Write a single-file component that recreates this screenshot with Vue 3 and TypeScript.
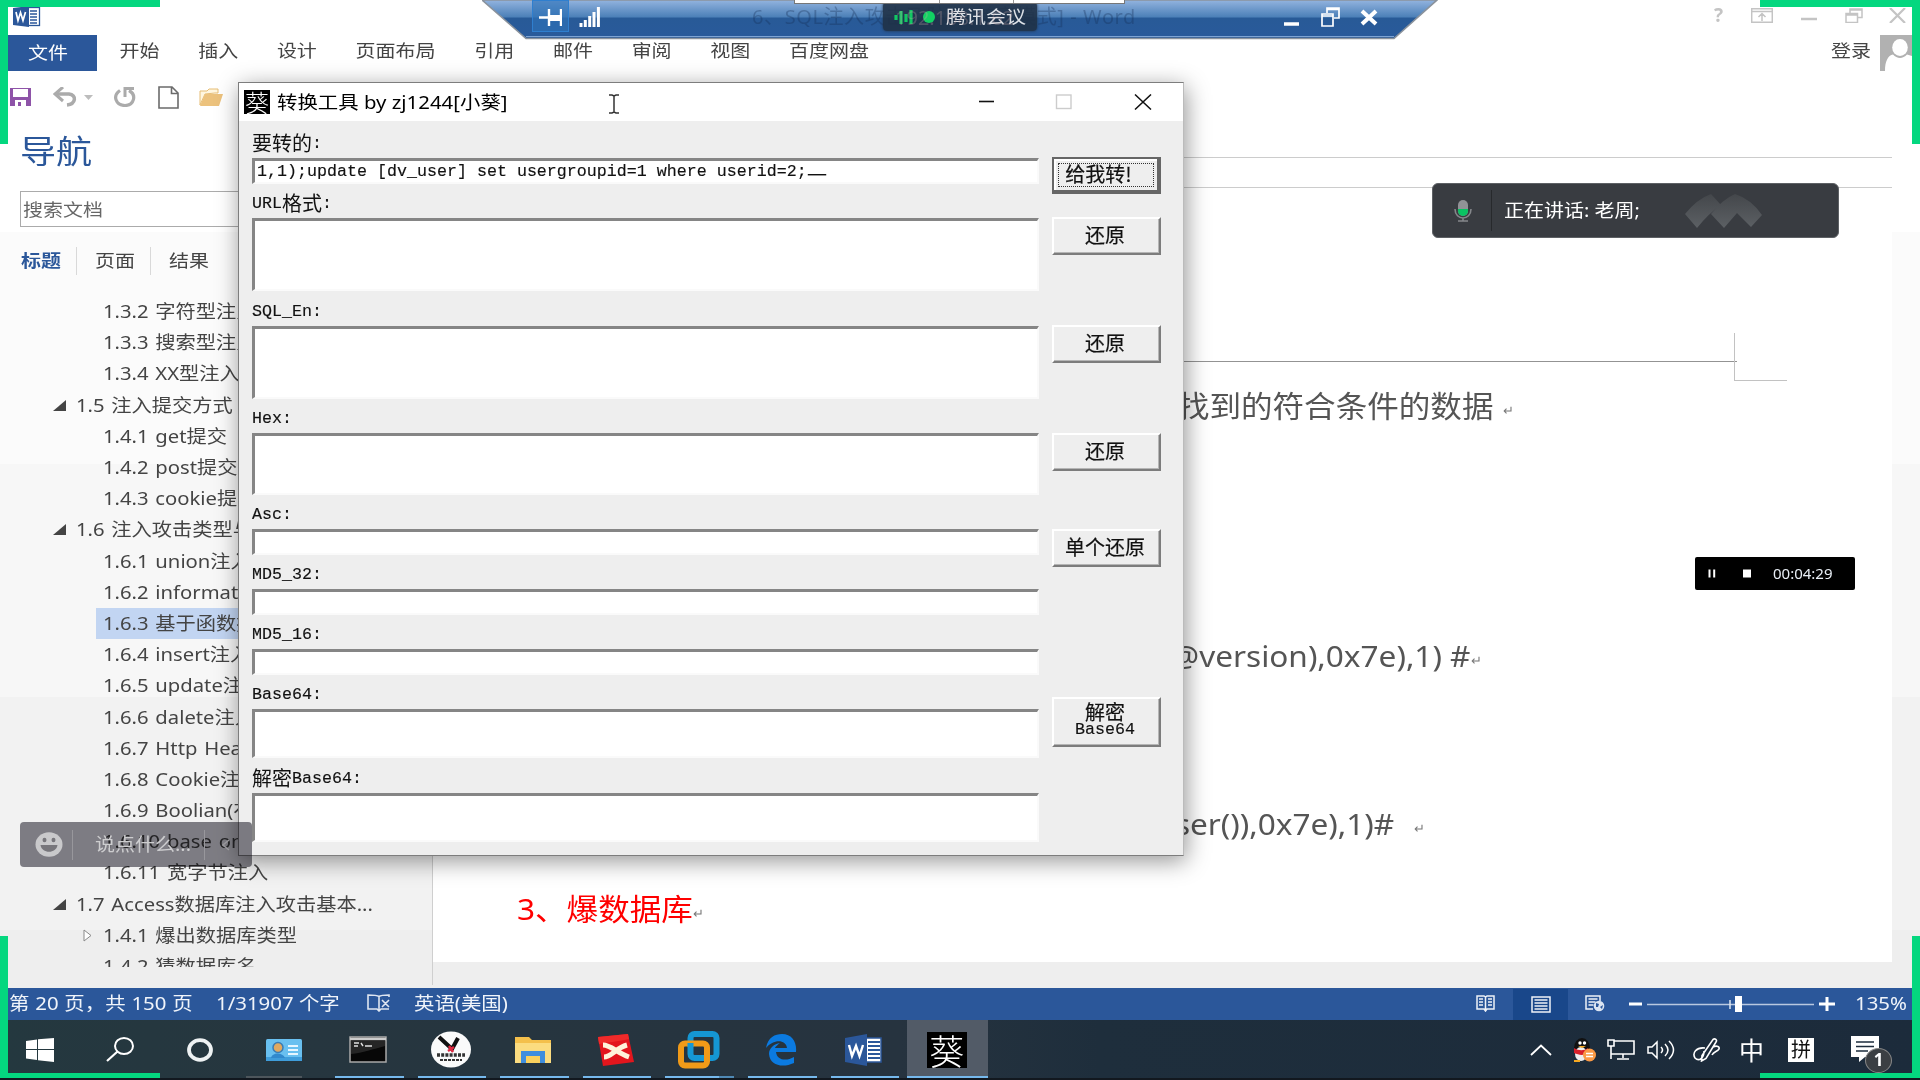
<script setup lang="ts">
interface NavItem { text: string; level: 1 | 2; arrow?: 'open' | 'closed'; active?: boolean }
interface Field { cjk?: string; latin?: string; tail?: string; height: number; space: number; value?: string }
interface ToolButton { lines: string[]; gap: number; height: number; primary?: boolean; mono?: string }

const ribbon: string[] = ['开始', '插入', '设计', '页面布局', '引用', '邮件', '审阅', '视图', '百度网盘']

const nav: NavItem[] = [
  { text: '1.3.2 字符型注入', level: 2 },
  { text: '1.3.3 搜索型注入', level: 2 },
  { text: '1.3.4 XX型注入', level: 2 },
  { text: '1.5 注入提交方式', level: 1, arrow: 'open' },
  { text: '1.4.1 get提交', level: 2 },
  { text: '1.4.2 post提交', level: 2 },
  { text: '1.4.3 cookie提交', level: 2 },
  { text: '1.6 注入攻击类型与方式', level: 1, arrow: 'open' },
  { text: '1.6.1 union注入', level: 2 },
  { text: '1.6.2 information', level: 2 },
  { text: '1.6.3 基于函数报错', level: 2, active: true },
  { text: '1.6.4 insert注入', level: 2 },
  { text: '1.6.5 update注入', level: 2 },
  { text: '1.6.6 dalete注入', level: 2 },
  { text: '1.6.7 Http Header', level: 2 },
  { text: '1.6.8 Cookie注入', level: 2 },
  { text: '1.6.9 Boolian(布尔)', level: 2 },
  { text: '1.6.10 base on', level: 2 },
  { text: '1.6.11 宽字节注入', level: 2 },
  { text: '1.7 Access数据库注入攻击基本...', level: 1, arrow: 'open' },
  { text: '1.4.1 爆出数据库类型', level: 2, arrow: 'closed' },
  { text: '1.4.2 猜数据库名', level: 2 },
]

const fields: Field[] = [
  { cjk: '要转的', tail: ':', height: 26, space: 1, value: '1,1);update [dv_user] set usergroupid=1 where userid=2;' },
  { latin: 'URL', cjk: '格式', tail: ':', height: 73, space: 2 },
  { latin: 'SQL_En', tail: ':', height: 73, space: 1 },
  { latin: 'Hex', tail: ':', height: 62, space: 1 },
  { latin: 'Asc', tail: ':', height: 26, space: 1 },
  { latin: 'MD5_32', tail: ':', height: 26, space: 1 },
  { latin: 'MD5_16', tail: ':', height: 26, space: 1 },
  { latin: 'Base64', tail: ':', height: 49, space: 2 },
  { cjk: '解密', tail: 'Base64:', height: 49, space: 2 },
]

const buttons: ToolButton[] = [
  { lines: ['给我转!'], gap: 36, height: 37, primary: true },
  { lines: ['还原'], gap: 23, height: 38 },
  { lines: ['还原'], gap: 70, height: 38 },
  { lines: ['还原'], gap: 70, height: 38 },
  { lines: ['单个还原'], gap: 58, height: 38 },
  { lines: ['解密'], mono: 'Base64', gap: 130, height: 50 },
]
</script>

<template>
  <div class="screen">
    <div class="word">
      <header class="titlebar">
        <svg class="wlogo" width="28" height="22" viewBox="0 0 28 22">
          <rect x="14" y="1.500" width="12.500" height="18" fill="#fff" stroke="#2b579a" stroke-width="1.300" />
          <path d="M17 5h7M17 8h7M17 11h7M17 14h7M17 17h7" stroke="#2b579a" stroke-width="1.300" />
          <path d="M0 2L16 0V21L0 19Z" fill="#2b579a" />
          <path d="M3 6l2 8.500 2.500-8 2.500 8L12.500 6" fill="none" stroke="#fff" stroke-width="1.700" />
        </svg>
        <div class="winctl">
          <span class="q">?</span>
          <svg width="22" height="15" viewBox="0 0 22 15"><path d="M.7.7h20.600v13.600H.7zM1 3.500h20M11 13V6M7.500 9L11 5.500 14.500 9" fill="none" stroke="#c4c4c4" stroke-width="1.500" /></svg>
          <svg width="18" height="15" viewBox="0 0 18 15"><path d="M1 11h16" stroke="#c4c4c4" stroke-width="2.500" /></svg>
          <svg width="18" height="15" viewBox="0 0 18 15"><path d="M1 5.500h11.500v9H1zM1 7h11M5 5V1h12v8.500h-4M5 2h12" fill="none" stroke="#c4c4c4" stroke-width="1.500" /></svg>
          <svg width="17" height="15" viewBox="0 0 17 15"><path d="M1 0l15 15M16 0L1 15" stroke="#c4c4c4" stroke-width="2.200" /></svg>
        </div>
      </header>

      <nav class="tabs">
        <div class="file"><span class="sq">文件</span></div>
        <span v-for="r in ribbon" :key="r" class="tab sq">{{ r }}</span>
        <span class="login sq">登录</span>
        <svg class="avatar" width="32" height="36" viewBox="0 0 32 36">
          <rect width="32" height="36" fill="#b1b1b1" />
          <ellipse cx="20" cy="12.500" rx="7.800" ry="8.500" fill="#fff" />
          <path d="M5 36C5 26 8 20.500 13 19.500 17 24 23 24 27 19.500L32 21V36Z" fill="#fff" />
        </svg>
      </nav>

      <div class="qat">
        <svg width="23" height="20" viewBox="0 0 23 20"><path d="M1 1h21v18H1z" fill="#8e53a8" /><path d="M4 2h15v8H4z" fill="#fff" /><path d="M6 13h11v6H6z" fill="#fff" /><path d="M9 15h3v4H9z" fill="#8e53a8" /></svg>
        <svg class="undo" width="24" height="20" viewBox="0 0 24 20"><path d="M3 7H16C24 8 23 17 14 18" fill="none" stroke="#ababab" stroke-width="3.500" /><path d="M10 0L2 7l8 7" fill="none" stroke="#ababab" stroke-width="3" /></svg>
        <svg class="caret" width="9" height="5" viewBox="0 0 9 5"><path d="M0 0h9L4.500 5z" fill="#bdbdbd" /></svg>
        <svg class="redo" width="24" height="20" viewBox="0 0 24 20"><path d="M7 3.500C-1 9 3 18.500 12 18.500S24 8 16 3.500" fill="none" stroke="#ababab" stroke-width="3.200" /><path d="M12 10V1.500h9" fill="none" stroke="#ababab" stroke-width="3" /></svg>
        <svg class="doc" width="21" height="23" viewBox="0 0 21 23"><path d="M1 1h13l6 6v15H1zM13.500 1v6.500H20" fill="#fff" stroke="#6b6b6b" stroke-width="1.600" /></svg>
        <svg class="fold" width="25" height="20" viewBox="0 0 25 20"><path d="M1 18V4h7l2-2h9v4h-3L6 7z" fill="#fff6e0" stroke="#e6bd75" /><path d="M6 7h18l-4 12H1z" fill="#ecc27d" /></svg>
      </div>

      <div class="body">
        <aside class="side">
          <h2><span class="sq">导航</span></h2>
          <div class="search"><span class="sq">搜索文档</span></div>
          <div class="stabs"><b class="sq">标题</b><i></i><span class="sq">页面</span><i></i><span class="sq">结果</span></div>
          <ul class="list">
            <li v-for="(n, i) in nav" :key="i" :class="['l' + n.level, { active: n.active }]">
              <svg v-if="n.arrow === 'open'" class="open" width="13" height="11" viewBox="0 0 13 11"><path d="M13 0v11H0z" fill="#444" /></svg>
              <svg v-if="n.arrow === 'closed'" class="closed" width="9" height="13" viewBox="0 0 9 13"><path d="M1 1l7 5.500L1 12z" fill="#fff" stroke="#8a8a8a" /></svg>
              <span>{{ n.text }}</span>
            </li>
          </ul>
        </aside>

        <main class="paper">
          <div class="ruler"></div>
          <div class="pagehead">
            <div class="headrule"></div>
            <div class="corner"></div>
          </div>
          <p class="line a"><span>查询并返回找到的符合条件的数据</span><i>↵</i></p>
          <p class="line b"><span>(@@version),0x7e),1) #</span><i>↵</i></p>
          <p class="line c"><span>user()),0x7e),1)#</span><i>↵</i></p>
          <p class="line d"><span>3、爆数据库</span><i>↵</i></p>
        </main>
      </div>

      <footer class="status">
        <span class="s1">第 20 页，共 150 页</span>
        <span class="s2">1/31907 个字</span>
        <svg class="s3" width="24" height="18" viewBox="0 0 24 18"><path d="M12 2.500V16M12 2.500C10 1 6 1 1 1v14h9l2 2 2-2h8M12 2.500C14 1 18 1 22 1v2M15 6l7 7M22 6l-7 7" fill="none" stroke="#dfe6f1" stroke-width="1.600" /></svg>
        <span class="s4">英语(美国)</span>
        <div class="views">
          <svg width="19" height="17" viewBox="0 0 19 17"><path d="M9.500 2L8 1H1v13h7l1.500 2L11 14h7V1h-7zM9.500 2v13M3 4h4M3 7h4M3 10h4M12 4h4M12 7h4M12 10h4" fill="none" stroke="#eef2f8" stroke-width="1.500" /></svg>
          <div class="on"><svg width="20" height="17" viewBox="0 0 20 17"><path d="M1 1h18v15H1zM3.500 4h13M3.500 7h13M3.500 10h13M3.500 13h13" fill="none" stroke="#eef2f8" stroke-width="1.500" /></svg></div>
          <svg class="web" width="20" height="17" viewBox="0 0 20 17"><path d="M15 6V1H1v13h7M3.500 4h9M3.500 7h7M3.500 10h5" fill="none" stroke="#eef2f8" stroke-width="1.500" /><circle cx="14" cy="11" r="5.300" fill="#dce5f2" /><path d="M11 8l3 1-1 3-2 0zM15 12l3-2-1 4z" fill="#2b579a" /></svg>
        </div>
        <svg class="zoom" width="208" height="20" viewBox="0 0 208 20"><path d="M0 10h13M190 10h16M198 3v14" stroke="#fff" stroke-width="3" /><path d="M18 10.500h167" stroke="#b9c8e0" stroke-width="1.300" /><path d="M101 6v9" stroke="#dfe6f1" stroke-width="1.500" /><rect x="106" y="2" width="7" height="16" fill="#fff" /></svg>
        <span class="pct">135%</span>
      </footer>
    </div>

    <div class="taskbar">
      <div class="tb w0"><svg width="28" height="24" viewBox="0 0 28 24"><path d="M0 3l11-1.500V11H0zM12 1.300L28 0v11H12zM0 12h11v10L0 20.500zM12 12h16v12l-16-1.800z" fill="#fff" /></svg></div>
      <div class="tb w1"><svg width="28" height="25" viewBox="0 0 28 25"><ellipse cx="18" cy="9" rx="9" ry="8" fill="none" stroke="#fff" stroke-width="2" /><path d="M11.500 14.500L1 24" stroke="#fff" stroke-width="2.200" /></svg></div>
      <div class="tb w1"><svg width="26" height="24" viewBox="0 0 26 24"><ellipse cx="13" cy="12" rx="11" ry="9.800" fill="none" stroke="#eef2f3" stroke-width="3.800" /></svg></div>
      <div class="tb w1b"><svg width="36" height="22" viewBox="0 0 36 22"><rect width="36" height="22" rx="1.500" fill="#69c0f0" /><rect y="18" width="36" height="4" fill="#3f9ddb" /><circle cx="12" cy="8.500" r="5" fill="#e0a860" stroke="#3a7cb4" stroke-width="1.500" /><path d="M5 19c1-6 12-6 14 0z" fill="#3189cd" /><path d="M22 7h10M22 11h10M22 15h10" stroke="#e6f6ff" stroke-width="1.800" /></svg><u class="dim"></u></div>
      <div class="tb"><svg width="38" height="27" viewBox="0 0 38 27"><rect x="1" y="1" width="36" height="25" fill="#070707" stroke="#a9a9a9" stroke-width="1.500" /><path d="M1 3h36" stroke="#ccc" stroke-width="2.500" /><path d="M5 7h5M5 10h4M12 7l2 3M16 10h7" stroke="#ddd" stroke-width="1.400" /><path d="M2 18C14 17 24 13 36 10V5H2z" fill="#fff" opacity=".12" /></svg><u></u></div>
      <div class="tb"><svg width="40" height="37" viewBox="0 0 40 37"><ellipse cx="20" cy="18.500" rx="20" ry="18" fill="#fafafa" /><path d="M8 6l13 12 6-11" fill="none" stroke="#111" stroke-width="4" /><path d="M17 20l6-4M18 15l4 6" stroke="#e02840" stroke-width="2.500" /><path d="M6 24h28" stroke="#333" stroke-width="3.500" stroke-dasharray="3 1.200" /><path d="M9 29h22" stroke="#333" stroke-width="1.800" stroke-dasharray="3 1" /></svg><u></u></div>
      <div class="tb"><svg width="38" height="28" viewBox="0 0 38 28"><path d="M1 1h14l3 3h19v23H1z" fill="#f4c04c" /><path d="M1 7h36v20H1z" fill="#fbdc80" /><path d="M7 15h24v12H7z" fill="#3f8ede" /><path d="M12 20h14v7H12z" fill="#fbd15d" /></svg><u></u></div>
      <div class="tb"><svg width="38" height="34" viewBox="0 0 38 34"><path d="M1 4L31 1l6 28-31 4z" fill="#e3161d" /><path d="M1 4L31 1l1 5C20 9 10 9 2 11z" fill="#f02a2a" /><path d="M6 12C14 12 20 20 32 24M7 24C14 24 19 15 30 12" fill="none" stroke="#fff3da" stroke-width="5" /></svg><u></u></div>
      <div class="tb"><svg width="42" height="38" viewBox="0 0 42 38"><rect x="12.500" y="3" width="26" height="24" rx="4" fill="none" stroke="#1597d4" stroke-width="6" /><rect x="3" y="12.500" width="26" height="22" rx="4" fill="none" stroke="#f09a18" stroke-width="6" /><path d="M12.500 16v-4M17 27h8" stroke="#1597d4" stroke-width="6" /></svg><u class="split"></u></div>
      <div class="tb"><svg width="32" height="32" viewBox="0 0 32 32"><path d="M1 14C3 3 10 0 17 0 27 0 32 8 31 18H11C12 27 22 27 29 23v6C18 34 5 32 4 20 4 14 9 10 15 9 10 13 10 14 10 14h12C21 5 8 5 1 14z" fill="#0b7ae0" /></svg><u></u></div>
      <div class="tb"><svg width="37" height="32" viewBox="0 0 37 32"><rect x="18" y="4" width="18" height="24" fill="#fff" stroke="#2b579a" stroke-width="1.500" /><path d="M23 8h12M23 12h12M23 16h12M23 20h12M23 24h12" stroke="#2b579a" stroke-width="1.800" /><path d="M0 4L22 0v32L0 28z" fill="#2b579a" /><path d="M4 11l3 11 4-10 3.500 10L18 11" fill="none" stroke="#fff" stroke-width="2.400" /></svg><u></u></div>
      <div class="tb sel"><span class="kui big">葵</span><u></u></div>
      <div class="tray">
        <svg width="22" height="12" viewBox="0 0 22 12"><path d="M1 11L11 1.500 21 11" fill="none" stroke="#fff" stroke-width="1.800" /></svg>
        <svg class="qq" width="26" height="24" viewBox="0 0 26 24"><ellipse cx="11" cy="10" rx="8" ry="10" fill="#111" /><ellipse cx="10" cy="16" rx="6" ry="7" fill="#eee" /><path d="M3 10c5 3 10 3 14 0v5c-5 3-9 2-14 0z" fill="#d8202a" /><circle cx="9" cy="5" r="1.700" fill="#fff" /><circle cx="13.500" cy="5" r="1.700" fill="#fff" /><path d="M7 8h8l-4 2z" fill="#f6a821" /><path d="M3 23h6" stroke="#f6a821" stroke-width="2" /><circle cx="18.500" cy="17" r="6.500" fill="#fb9a45" /><path d="M15 15.500h7M15 18.500h7" stroke="#fff" stroke-width="1.300" /></svg>
        <svg class="net" width="28" height="21" viewBox="0 0 28 21"><path d="M7 2h20v13H4V8M16 15v4M10 20h12M1 1h6v6H1zM4 7v13" fill="none" stroke="#fff" stroke-width="1.600" /></svg>
        <svg class="vol" width="28" height="22" viewBox="0 0 28 22"><path d="M1 8v6h4l5 5V3L5 8zM14 8c2 2 2 4 0 6M18 5c4 4 4 8 0 12M22 2c6 6 6 12 0 18" fill="none" stroke="#fff" stroke-width="1.500" /></svg>
        <svg class="pen" width="28" height="24" viewBox="0 0 28 24"><path d="M20 1.500C22 0 24.500 2 23 4L13 20.500 8.500 23 9 17.500ZM12 10C3 9-1 15 2 20c4 4 9 0 9-7M20 9c4-2 7 0 6 2-2 3-5 2-7 6" fill="none" stroke="#fff" stroke-width="1.600" /></svg>
        <span class="zh">中</span>
        <span class="pin">拼</span>
        <div class="note">
          <svg width="28" height="27" viewBox="0 0 28 27"><path d="M0 0h28v21H14l-6 5v-5H0z" fill="#fff" /><path d="M5 6h18M5 10.500h18M5 15h12" stroke="#1d2c3c" stroke-width="1.600" /></svg>
          <b>1</b>
        </div>
      </div>
    </div>

    <section class="dialog">
      <div class="dtitle">
        <span class="kui">葵</span>
        <span class="dname">转换工具 by zj1244[小葵]</span>
        <svg class="ctl" width="174" height="16" viewBox="0 0 174 16"><path d="M1 7.500h15" stroke="#111" stroke-width="1.600" /><rect x="78.500" y="1" width="14.500" height="13.500" fill="none" stroke="#ccc" stroke-width="1.400" /><path d="M157 .5l16 15M173 .5l-16 15" stroke="#111" stroke-width="1.500" /></svg>
      </div>
      <svg class="ibeam" width="12" height="20" viewBox="0 0 12 20"><path d="M1 1h3l2 1 2-1h3M6 2v16M1 19h3l2-1 2 1h3" fill="none" stroke="#333" stroke-width="1.500" /></svg>
      <div class="dbody">
        <div class="form">
          <template v-for="(f, i) in fields" :key="i">
            <label><em v-if="f.latin">{{ f.latin }}</em><span v-if="f.cjk">{{ f.cjk }}</span><em>{{ f.tail }}</em></label>
            <div class="box" :style="{ height: f.height + 'px', marginBottom: f.space + 'px' }"><em v-if="f.value">{{ f.value }}</em><span v-if="f.value">—</span></div>
          </template>
        </div>
        <div class="btns">
          <div v-for="(b, i) in buttons" :key="i" class="btn" :class="{ primary: b.primary, two: b.mono }" :style="{ marginTop: b.gap + 'px', height: b.height + 'px' }">
            <span v-for="l in b.lines" :key="l">{{ l }}</span>
            <em v-if="b.mono">{{ b.mono }}</em>
          </div>
        </div>
      </div>
    </section>

    <div class="chat">
      <svg width="28" height="25" viewBox="0 0 28 25"><ellipse cx="14" cy="12.500" rx="13.500" ry="12.200" fill="#c9c9cb" /><ellipse cx="9.500" cy="8" rx="2" ry="2.200" fill="#77767b" /><ellipse cx="18.500" cy="8" rx="2" ry="2.200" fill="#77767b" /><path d="M5.500 13h17c-1 9-16 9-17 0z" fill="#77767b" /></svg>
      <i></i><span>说点什么...</span><i class="r"></i>
      <svg class="lt" width="8" height="12" viewBox="0 0 8 12"><path d="M7 1L1 6l6 5" fill="none" stroke="#98979b" stroke-width="1.500" /></svg>
    </div>

    <div class="remote">
      <svg class="rshape" width="956" height="40" viewBox="0 0 956 40">
        <defs><linearGradient id="rg" x1="0" y1="0" x2="0" y2="1"><stop offset="0" stop-color="#93b4df" /><stop offset=".44" stop-color="#4c80b8" /><stop offset=".47" stop-color="#285a97" /><stop offset="1" stop-color="#295a9b" /></linearGradient></defs>
        <path d="M0 0H955L912 38.500H44Z" fill="url(#rg)" stroke="#8a929c" stroke-width="1.600" />
        <path d="M44 36.500H912" stroke="#7ea4d4" stroke-width="1" />
      </svg>
      <span class="ghost">6、SQL注入攻击及防御[兼容模式] - Word</span>
      <div class="pinbox"><svg width="23" height="17" viewBox="0 0 23 17"><path d="M0 8.500h9M10 0v17M22 0v17" stroke="#fff" stroke-width="2.400" /><path d="M10 6h12v6H10z" fill="#fff" /></svg></div>
      <svg class="sig" width="21" height="20" viewBox="0 0 21 20"><path d="M2 20v-4M6.300 20v-7M10.700 20V9M15 20V5M19.400 20V0" stroke="#fff" stroke-width="3" /></svg>
      <svg class="rctl" width="95" height="20" viewBox="0 0 95 20"><path d="M0 17h15" stroke="#fff" stroke-width="3.500" /><path d="M38 7h11v12H38zM38 9h11M43 6V1h12v10h-5M43 2.500h12" fill="none" stroke="#fff" stroke-width="1.700" /><path d="M78 4l14 13M92 4l-14 13" stroke="#fff" stroke-width="4" /></svg>
    </div>
    <div class="meet">
      <svg width="44" height="20" viewBox="0 0 44 20"><path d="M2 13V8M7 17V4M12 15V7M17 17V3" stroke="#12c763" stroke-width="3.200" /><circle cx="35" cy="10" r="6" fill="#12d163" /></svg>
      <span>腾讯会议</span><small>192.168.1.62</small>
    </div>
    <div class="strip"><i></i><i></i><i></i></div>

    <div class="toast">
      <svg width="18" height="22" viewBox="0 0 18 22"><rect x="4" y="0" width="10" height="16" rx="5" fill="#919296" /><path d="M4 9h10v2a5 5 0 0 1-10 0z" fill="#0ac262" /><path d="M1 9c0 12 16 12 16 0M9 18v3M4 21h10" fill="none" stroke="#85878b" stroke-width="1.600" /></svg>
      <i></i><span>正在讲话: 老周;</span>
      <svg class="mark" width="78" height="36" viewBox="0 0 78 36"><defs><linearGradient id="mg" x1="0" y1="0" x2="0" y2="1"><stop offset="0" stop-color="#44474b" /><stop offset="1" stop-color="#5c6064" /></linearGradient></defs><path d="M0 21Q12 6 26 1L36 12Q24 20 12 35Z" fill="url(#mg)" /><path d="M26 21Q38 6 50 1Q66 6 77 22L66 34 52 20 39 35z" fill="url(#mg)" /></svg>
    </div>
    <div class="rec"><svg width="44" height="9" viewBox="0 0 44 9"><path d="M2.500 .5v8M7.200 .5v8" stroke="#fff" stroke-width="2" /><rect x="36" y=".5" width="8" height="8" fill="#fff" /></svg><span>00:04:29</span></div>

    <div class="edge tl"></div><div class="edge tr"></div><div class="edge bl"></div><div class="edge br"></div>
  </div>
</template>

<style>
body { background: #fff; overflow: hidden; }
</style>
<style scoped>
* { box-sizing: border-box; }
.screen { position: relative; width: 1920px; height: 1080px; overflow: hidden; font-family: "Noto Sans", "Noto Sans CJK SC", sans-serif; font-size: 20px; color: #444; white-space: nowrap; }
svg { display: block; flex: none; }
i, em { font-style: normal; }
.sq { display: inline-block; transform: scaleY(.88); }
.word { height: 1020px; display: flex; flex-direction: column; background: linear-gradient(#fff 0 232px, #fbfbfb 232px 464px, #f7f7f7 464px 697px, #f2f2f2 697px 930px, #eee 930px); }
.titlebar { height: 35px; display: flex; justify-content: space-between; padding: 6px 14px 0 13px; }
.winctl { display: flex; gap: 27px; padding-top: 2px; color: #c4c4c4; }
.winctl .q { font-weight: 700; line-height: 15px; font-size: 19px; margin-right: 0; }
.winctl svg:nth-of-type(1) { margin-right: 1px; margin-left: 1px; }
.winctl { gap: 26.500px; }
.tabs { height: 36px; display: flex; align-items: center; padding-left: 8px; line-height: 30px; }
.file { width: 89px; height: 36px; background: #2b579a; color: #fff; display: flex; align-items: center; justify-content: center; padding-right: 9px; }
.tab { margin-left: 38.7px; margin-top: -5px; }
.file + .tab { margin-left: 22.500px; }
.login { margin-left: auto; margin-right: 9px; margin-top: -5px; }
.avatar { margin-right: 8px; }
.qat { height: 52px; display: flex; align-items: center; padding-left: 9px; }
.undo { margin-left: 21px; }
.caret { margin-left: 7px; }
.redo { margin-left: 20px; }
.doc { margin-left: 21px; }
.fold { margin-left: 20px; }
.body { flex: 1; display: flex; min-height: 0; }
.side { width: 433px; height: 862px; border-right: 1px solid #cfcfcf; padding-top: 11px; overflow: hidden; }
h2 { margin: 0 0 0 20px; font-size: 36px; line-height: 36px; font-weight: 400; color: #2b579a; }
.search { margin: 21px 16px 0 20px; height: 36px; border: 1px solid #ababab; background: #fff; color: #666; padding-left: 2px; line-height: 35px; }
.stabs { display: flex; align-items: center; height: 28px; margin: 20px 0 0 21px; line-height: 28px; }
.stabs b { color: #2b579a; }
.stabs i { width: 1px; height: 28px; background: #d9d9d9; margin: 0 18px 0 15px; }
.list { margin: 21px 0 0; padding: 0; list-style: none; height: 671px; overflow: hidden; }
.list li { height: 31.2px; line-height: 31px; display: flex; align-items: center; }
.list span { display: inline-block; transform: scale(1.012, .93); transform-origin: 0 50%; word-spacing: 1.500px; }
.l1 { padding-left: 53px; }
.l1 span { margin-left: 10px; }
.l2 { margin-left: 96px; padding-left: 6.500px; }
.active { background: #c2d5f2; }
.closed { margin-left: -20px; margin-right: 11px; }
.paper { width: 1459px; height: 839px; background: #fff; }
.ruler { margin-top: 34px; height: 31px; border-top: 1px solid #ccc; border-bottom: 1px solid #ccc; }
.pagehead { height: 48px; margin: 145px 105px 0 601px; display: flex; }
.headrule { width: 703px; height: 29px; border-bottom: 1px solid #939393; margin-right: -3px; }
.corner { flex: 1; border-left: 1.500px solid #c2c2c2; border-bottom: 1.500px solid #c2c2c2; }
.line { margin: 0; height: 44px; line-height: 44px; display: flex; font-size: 29.500px; color: #555; }
.line span { transform: scaleX(1.07); transform-origin: 100% 50%; }
.line i { font-size: 13px; color: #777; line-height: 52px; }
.line.a, .line.b, .line.c { justify-content: flex-end; }
.a { padding-right: 378px; margin-top: 3px !important; }
.a i { margin-left: 9px; }
.b { padding-right: 410px; margin-top: 206px !important; }
.b i { margin-left: 1px; }
.c { padding-right: 467px; margin-top: 124px !important; }
.c i { margin-left: 20px; }
.line.d { color: #f00; padding-left: 84px; margin-top: 41px; }
.line.d span { transform-origin: 0 50%; }
.line.d i { margin-left: 12px; }
.status { height: 32px; background: #2b579a; color: #f0f4fa; display: flex; align-items: center; line-height: 30px; padding-left: 9px; }
.status > span { display: inline-block; transform: scale(1.02, .93); transform-origin: 0 50%; margin-top: -2px; }
.s1 { width: 207px; word-spacing: .5px; }
.s2 { width: 151px; }
.s3 { margin-right: 23px; margin-top: -2px; }
.views { margin-left: auto; display: flex; align-items: center; height: 32px; padding-bottom: 1px; }
.views .on { width: 55px; height: 31px; background: #19478a; margin: 1px 17px 0 18px; display: flex; align-items: center; justify-content: center; }
.zoom { margin-left: 24px; margin-top: -1px; }
.pct { width: 52px; margin: 0 13px 0 18px; }
.taskbar { height: 60px; display: flex; background: linear-gradient(90deg, #24383f 0, #26363f 300px, #26333f 900px, #1e2e3c 1100px, #1c2b3b); border-bottom: 2px solid #12181f; }
.tb { position: relative; width: 82.600px; height: 58px; flex: none; display: flex; align-items: center; justify-content: center; padding: 1px 2px 0 0; }
.w0 { width: 80px; padding-right: 0; }
.w1 { width: 80px; padding-right: 0; }
.w1b { width: 88px; padding-right: 0; }
.tb u { position: absolute; left: 7px; right: 7px; bottom: 0; height: 2px; background: #76b9ed; }
.tb u.dim { background: #4d565c; left: 6px; right: 26px; }
.tb u.split { background: linear-gradient(90deg, #76b9ed 0 54px, #4f89b5 54px); }
.sel { background: #525b67; margin-left: 1px; width: 81px; }
.sel u { left: 0; right: 0; }
.kui { background: #000; color: #fff; width: 26px; height: 24px; line-height: 24px; font-size: 24px; text-align: center; font-family: "Noto Sans CJK SC", sans-serif; font-weight: 300; }
.kui.big { width: 40px; height: 36px; line-height: 35px; font-size: 35px; }
.tray { margin-left: auto; display: flex; align-items: center; padding: 1px 28px 0 0; color: #fff; }
.qq { margin-left: 19px; }
.net { margin-left: 10px; }
.vol { margin-left: 12px; }
.pen { margin-left: 18px; }
.zh { margin-left: 18px; width: 25px; font-size: 25px; line-height: 26px; }
.pin { margin-left: 24px; width: 26px; height: 24px; background: #fff; color: #111; text-align: center; line-height: 23px; }
.note { position: relative; margin-left: 37px; margin-right: 13px; }
.note b { position: absolute; left: 14px; top: 12px; width: 27px; height: 25px; border-radius: 50%; background: #3b3f43; border: 1.500px solid #888; font-size: 17px; line-height: 21px; text-align: center; }
.dialog { position: absolute; left: 238px; top: 82px; width: 946px; height: 774px; background: #eee; border: 1px solid #7d7d7d; border-right-color: #bbb; box-shadow: 2px 5px 22px rgba(0, 0, 0, .42); }
.dtitle { height: 38px; background: #fff; display: flex; align-items: center; padding-left: 5px; color: #000; }
.dname { margin: -2px 0 0 7px; transform: scale(1.02, .9); transform-origin: 0 50%; }
.ctl { margin-left: auto; margin-right: 31px; }
.ibeam { position: absolute; left: 369px; top: 11px; }
.dbody { display: flex; padding-left: 13px; color: #111; }
.form { width: 787px; padding-top: 4px; }
label, .box, .btn { font-family: "Noto Sans CJK SC", sans-serif; font-size: 20px; display: flex; align-items: center; }
label { height: 33px; padding-top: 3px; }
label span { margin-top: -2px; }
label em { padding-top: 1px; }
label span + em { padding-top: 0; }
em { font-family: "Liberation Mono", monospace; font-size: 16.670px; -webkit-text-stroke: .15px #111; }
.box { background: #fff; border-style: solid; border-width: 3px 2px 2px 3px; border-color: #858585 #fafafa #fafafa #858585; padding-left: 2px; }
.box span { line-height: 18px; font-size: 23px; height: 20px; }
.btns { width: 109px; margin-left: 13px; }
.btn { justify-content: center; border: 2px solid; border-color: #fff #7c7c7c #7c7c7c #fff; box-shadow: inset -1px -1px #b5b5b5; line-height: 20px; -webkit-text-stroke: .2px #111; padding: 0 3px 2px 0; }
.two { flex-direction: column; line-height: 18px; padding-bottom: 1px; }
.two span { margin-top: -2px; }
.two em { line-height: 16px; margin-top: 1px; }
.primary { border-color: #666; border-width: 2px 4px 4px 2px; position: relative; padding: 0 14px 1px 0; box-shadow: inset 2px 2px #fff; }
.primary::after { content: ""; position: absolute; inset: 4px 3px 3px 4px; border: 1.500px dotted #333; }
.chat { position: absolute; left: 20px; top: 822px; width: 232px; height: 45px; display: flex; align-items: center; padding-left: 15px; color: #cdcdcf; }
.chat::before { content: ""; position: absolute; inset: 0; border-radius: 4px; background: rgba(74, 73, 80, .7); }
.chat > * { position: relative; }
.chat i { width: 1px; height: 30px; background: #98979c; margin-left: 9px; }
.chat span { margin-left: 22px; width: 96px; line-height: 30px; transform: scaleY(.9); }
.chat i.r { margin-left: 13px; }
.lt { margin-left: 17px; }
.remote { position: absolute; left: 482px; top: 0; width: 956px; height: 40px; }
.remote > * { position: absolute; top: 0; }
.rshape { left: 0; }
.ghost { left: 270px; line-height: 34px; font-size: 20px; color: rgba(20, 45, 85, .33); letter-spacing: .6px; }
.pinbox { left: 50px; width: 37px; height: 32px; border: 1px solid #2f7fcf; background: rgba(45, 113, 184, .65); display: flex; align-items: center; justify-content: center; padding-top: 2px; }
.remote .sig { left: 97px; top: 7px; }
.remote .rctl { left: 802px; top: 7px; }
.meet { position: absolute; left: 883px; top: 2px; width: 154px; height: 29px; border-radius: 4px; background: rgba(31, 49, 70, .9); display: flex; align-items: center; padding-left: 11px; color: #dfe3e8; box-shadow: 0 0 3px #1f3146; }
.meet span { margin-left: 8px; line-height: 28px; transform: scaleY(.88); }
.meet small { position: absolute; left: 12px; top: 5px; font-size: 20px; line-height: 22px; color: rgba(200, 170, 170, .28); }
.strip { position: absolute; left: 794px; top: 0; width: 331px; height: 4px; display: flex; background: #fff; border: 1px solid #777; border-top: 0; }
.strip i { width: 145px; border-right: 1px solid #999; }
.strip i + i { width: 74px; }
.strip i:last-child { border: 0; }
.toast { position: absolute; left: 1432px; top: 183px; width: 407px; height: 55px; border-radius: 6px; background: #393c41; border: 1px solid #5e6165; display: flex; align-items: center; padding-left: 21px; color: #fff; }
.toast i { width: 1px; height: 41px; background: #27292c; margin: 0 12px 0 19px; }
.toast span { line-height: 30px; width: 181px; transform: scaleY(.9); }
.rec { position: absolute; left: 1695px; top: 557px; width: 160px; height: 33px; border-radius: 2px; background: #000; color: #e8eef5; display: flex; align-items: center; padding: 0 0 1px 12px; font-size: 15px; }
.rec span { margin-left: 22px; line-height: 20px; }
.edge { position: absolute; width: 160px; height: 144px; border: 0 solid #04d77f; pointer-events: none; }
.tl { left: 0; top: 0; border-width: 7px 0 0 8px; }
.tr { right: 0; top: 0; border-width: 7px 8px 0 0; }
.bl { left: 0; top: 936px; height: 142px; border-width: 0 0 5px 8px; }
.br { right: 0; top: 936px; height: 142px; border-width: 0 8px 5px 0; }
.chat::before { mix-blend-mode: multiply; background: #84838a; }
</style>
